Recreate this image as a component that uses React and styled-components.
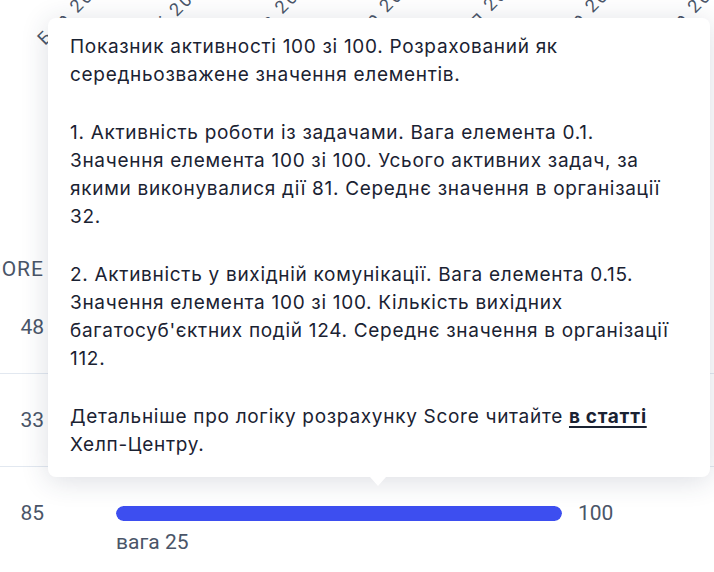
import styled, { createGlobalStyle } from 'styled-components';

const GlobalStyle = createGlobalStyle`
  html, body {
    margin: 0;
    padding: 0;
    background: #ffffff;
    overflow: hidden;
  }
  * { box-sizing: border-box; }
`;

const months = ['Бер 2023', 'Кві 2023', 'Тра 2023', 'Чер 2023', 'Лип 2023', 'Сер 2023', 'Вер 2023'];

const rows = [
  { score: 48, value: 100, weight: 25 },
  { score: 33, value: 100, weight: 25 },
  { score: 85, value: 100, weight: 25 },
];

function App() {
  return (
    <>
      <GlobalStyle />
      <Page>
        <Axis width="714" height="60">
          {months.map((m, i) => {
            const x = 45 + i * 103;
            const y = 46;
            return (
              <text key={m} x={x} y={y} transform={`rotate(-45 ${x} ${y})`}>
                {m}
              </text>
            );
          })}
        </Axis>

        <Table>
          <HeadRow>
            <ScoreCell>SCORE</ScoreCell>
          </HeadRow>
          {rows.map((r, i) => (
            <Row key={i}>
              <ScoreCell>{r.score}</ScoreCell>
              <BarCell>
                <BarLine>
                  <Track>
                    <Fill style={{ width: `${r.value}%` }} />
                  </Track>
                  <Value>{r.value}</Value>
                </BarLine>
                <Weight>вага {r.weight}</Weight>
              </BarCell>
            </Row>
          ))}
        </Table>

        <Tooltip>
          <p>Показник активності 100 зі 100. Розрахований як середньозважене значення елементів.</p>
          <p>
            1. Активність роботи із задачами. Вага елемента 0.1. Значення елемента 100 зі 100. Усього
            активних задач, за якими виконувалися дії 81. Середнє значення в організації 32.
          </p>
          <p>
            2. Активність у вихідній комунікації. Вага елемента 0.15. Значення елемента 100 зі 100.
            Кількість вихідних багатосуб'єктних подій 124. Середнє значення в організації 112.
          </p>
          <p>
            Детальніше про логіку розрахунку Score читайте <a href="#">в статті</a> Хелп-Центру.
          </p>
        </Tooltip>
      </Page>
    </>
  );
}

export default App;

const Page = styled.div`
  position: relative;
  width: 714px;
  height: 572px;
  overflow: hidden;
  background: #fff;
  font-family: Roboto, 'Liberation Sans', sans-serif;
`;

const Axis = styled.svg`
  display: block;

  text {
    font-family: Roboto, 'Liberation Sans', sans-serif;
    font-size: 18px;
    letter-spacing: 2.5px;
    fill: #4a5568;
  }
`;

const Table = styled.div`
  margin-top: 197px;
  display: flex;
  flex-direction: column;
  color: #4a5568;
  font-size: 21px;
  line-height: 24px;
`;

const HeadRow = styled.div`
  display: flex;
  height: 24px;
  letter-spacing: 1px;
`;

const Row = styled.div`
  display: flex;
  height: 93px;
  padding-top: 34px;
  border-bottom: 1px solid #e2e8f0;

  &:last-child {
    border-bottom: none;
  }
`;

const ScoreCell = styled.div`
  width: 44px;
  flex-shrink: 0;
  display: flex;
  justify-content: flex-end;
  overflow: hidden;
  white-space: nowrap;
  height: 24px;
`;

const BarCell = styled.div`
  margin-left: 72px;
  display: flex;
  flex-direction: column;
  gap: 5px;
`;

const BarLine = styled.div`
  display: flex;
  align-items: center;
  gap: 16px;
  height: 24px;
`;

const Track = styled.div`
  width: 446px;
  height: 15px;
  border-radius: 8px;
  background: #e8ebf5;
  overflow: hidden;
`;

const Fill = styled.div`
  height: 100%;
  border-radius: 8px;
  background: #3d4ef0;
`;

const Value = styled.span``;

const Weight = styled.span``;

const Tooltip = styled.div`
  position: absolute;
  left: 48px;
  top: 18px;
  width: 662px;
  padding: 15px 22px 18px 22px;
  background: #fff;
  border-radius: 8px;
  box-shadow: 0 4px 28px rgba(40, 52, 80, 0.16);
  font-family: Inter, 'Noto Sans', sans-serif;
  font-size: 19px;
  letter-spacing: 0.7px;
  line-height: 28px;
  color: #1a2232;

  p {
    margin: 0;
  }

  p + p {
    margin-top: 30px;
  }

  a {
    color: #1a2232;
    font-weight: 700;
    text-decoration: underline;
    text-decoration-thickness: 2px;
    text-underline-offset: 3px;
  }

  &::after {
    content: '';
    position: absolute;
    left: 322px;
    bottom: -9px;
    border-left: 8px solid transparent;
    border-right: 8px solid transparent;
    border-top: 9px solid #fff;
  }
`;
